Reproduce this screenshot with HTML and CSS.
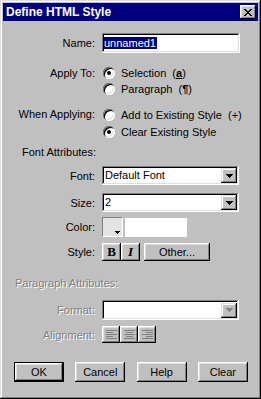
FILE: index.html
```html
<!DOCTYPE html>
<html>
<head>
  <title>Define HTML Style</title>
  <link rel="stylesheet" href="styles.css">
</head>
<body>
  <div class="window">
    <div class="titlebar">
      <span class="title">Define HTML Style</span>
      <span class="close">
        <svg width="8" height="7" viewBox="0 0 8 7" shape-rendering="crispEdges"><path d="M0 0h2v1h-2z M6 0h2v1h-2z M1 1h2v1h-2z M5 1h2v1h-2z M2 2h4v1h-4z M3 3h2v1h-2z M2 4h4v1h-4z M1 5h2v1h-2z M5 5h2v1h-2z M0 6h2v1h-2z M6 6h2v1h-2z" fill="#000"/></svg>
      </span>
    </div>

    <div class="row name-row">
      <span class="lbl">Name:</span>
      <div class="field name-field"><span class="selected">unnamed1</span></div>
    </div>

    <div class="group apply">
      <span class="lbl">Apply To:</span>
      <div class="options">
        <div class="option"><span class="radio on"></span>Selection&nbsp; (<u class="glyph">a</u>)</div>
        <div class="option"><span class="radio"></span>Paragraph&nbsp; (<b>&para;</b>)</div>
      </div>
    </div>

    <div class="group when">
      <span class="lbl">When Applying:</span>
      <div class="options">
        <div class="option"><span class="radio"></span>Add to Existing Style&nbsp; (+)</div>
        <div class="option"><span class="radio on"></span>Clear Existing Style</div>
      </div>
    </div>

    <div class="heading font-heading">Font Attributes:</div>

    <div class="row font-row">
      <span class="lbl">Font:</span>
      <div class="field combo"><span class="value">Default Font</span><span class="drop"><svg width="7" height="4" viewBox="0 0 7 4" shape-rendering="crispEdges"><path d="M0 0h7v1h-7z M1 1h5v1h-5z M2 2h3v1h-3z M3 3h1v1h-1z" fill="#000"/></svg></span></div>
    </div>

    <div class="row size-row">
      <span class="lbl">Size:</span>
      <div class="field combo"><span class="value">2</span><span class="drop"><svg width="7" height="4" viewBox="0 0 7 4" shape-rendering="crispEdges"><path d="M0 0h7v1h-7z M1 1h5v1h-5z M2 2h3v1h-3z M3 3h1v1h-1z" fill="#000"/></svg></span></div>
    </div>

    <div class="row color-row">
      <span class="lbl">Color:</span>
      <span class="swatch"><svg width="5" height="3" viewBox="0 0 5 3" shape-rendering="crispEdges"><path d="M0 0h5v1h-5z M1 1h3v1h-3z M2 2h1v1h-1z" fill="#000"/></svg></span>
      <span class="color-text"></span>
    </div>

    <div class="row style-row">
      <span class="lbl">Style:</span>
      <span class="btn tool bold">B</span>
      <span class="btn tool italic">I</span>
      <span class="btn other">Other...</span>
    </div>

    <div class="heading para-heading disabled">Paragraph Attributes:</div>

    <div class="row format-row">
      <span class="lbl disabled">Format:</span>
      <div class="field combo"><span class="value"></span><span class="drop"><svg width="7" height="4" viewBox="0 0 7 4" shape-rendering="crispEdges"><path d="M0 0h7v1h-7z M1 1h5v1h-5z M2 2h3v1h-3z M3 3h1v1h-1z" fill="#808080"/></svg></span></div>
    </div>

    <div class="row align-row">
      <span class="lbl disabled">Alignment:</span>
      <span class="btn align">
        <svg width="11" height="9" viewBox="0 0 11 9" shape-rendering="crispEdges"><path d="M0 0h11v1h-11z M0 2h7v1h-7z M0 4h11v1h-11z M0 6h7v1h-7z M0 8h11v1h-11z" fill="#808080"/></svg>
      </span>
      <span class="btn align">
        <svg width="11" height="9" viewBox="0 0 11 9" shape-rendering="crispEdges"><path d="M0 0h11v1h-11z M2 2h7v1h-7z M0 4h11v1h-11z M2 6h7v1h-7z M0 8h11v1h-11z" fill="#808080"/></svg>
      </span>
      <span class="btn align">
        <svg width="11" height="9" viewBox="0 0 11 9" shape-rendering="crispEdges"><path d="M0 0h11v1h-11z M4 2h7v1h-7z M0 4h11v1h-11z M4 6h7v1h-7z M0 8h11v1h-11z" fill="#808080"/></svg>
      </span>
    </div>

    <div class="buttons">
      <span class="btn push default">OK</span>
      <span class="btn push">Cancel</span>
      <span class="btn push">Help</span>
      <span class="btn push">Clear</span>
    </div>
  </div>
</body>
</html>
```

FILE: styles.css
```css
body {
  margin: 0;
  font-family: "Liberation Sans", Arial, sans-serif;
  font-size: 11px;
  color: #000;
  background: #c0c0c0;
}

.window {
  box-sizing: border-box;
  width: 261px;
  height: 399px;
  padding: 3px;
  background: #c0c0c0;
  box-shadow: inset -1px -1px #000, inset 1px 1px #dfdfdf,
              inset -2px -2px #808080, inset 2px 2px #fff;
}

.titlebar {
  height: 18px;
  background: #000080;
  display: flex;
  align-items: center;
  justify-content: space-between;
  padding: 0 2px 0 3px;
}

.title {
  color: #fff;
  font-weight: bold;
  font-size: 12px;
}

.close {
  width: 16px;
  height: 14px;
  background: #c0c0c0;
  display: flex;
  align-items: center;
  justify-content: center;
  box-shadow: inset -1px -1px #000, inset 1px 1px #fff,
              inset -2px -2px #808080, inset 2px 2px #dfdfdf;
}

.row {
  display: flex;
  align-items: center;
}

.lbl {
  flex: none;
  width: 92px;
  margin-right: 7px;
  text-align: right;
}

.disabled {
  color: #808080;
  text-shadow: 1px 1px #fff;
}

/* sunken fields */
.field {
  box-sizing: border-box;
  background: #fff;
  box-shadow: inset -1px -1px #fff, inset 1px 1px #808080,
              inset -2px -2px #dfdfdf, inset 2px 2px #000;
}

.name-row {
  margin-top: 12px;
}

.name-field {
  width: 138px;
  height: 20px;
  padding: 3px 2px;
  line-height: 14px;
}

.selected {
  background: #000080;
  color: #fff;
  padding: 0 1px 0 0;
}

.group {
  display: flex;
}

.group .lbl {
  line-height: 16px;
}

.apply {
  margin-top: 12px;
}

.when {
  margin-top: 9px;
}

.when .option {
  height: 17px;
}

.option {
  display: flex;
  align-items: center;
  height: 16px;
}

.radio {
  box-sizing: border-box;
  width: 12px;
  height: 12px;
  margin: 0 6px 0 1px;
  border-radius: 50%;
  background: #fff;
  position: relative;
  box-shadow: inset 1px 1px #808080, inset -1px -1px #fff,
              inset 2px 2px #000, inset -2px -2px #dfdfdf;
}

.radio.on::after {
  content: "";
  position: absolute;
  left: 4px;
  top: 4px;
  width: 4px;
  height: 4px;
  border-radius: 50%;
  background: #000;
}

.glyph {
  font-weight: bold;
}

.heading {
  line-height: 16px;
}

.font-heading {
  margin-top: 4px;
  padding-left: 19px;
}

.para-heading {
  margin-top: 14px;
  padding-left: 12px;
}

.combo {
  width: 137px;
  height: 19px;
  display: flex;
  align-items: center;
  justify-content: space-between;
  padding: 2px 2px 2px 3px;
}

.value {
  line-height: 15px;
}

.drop {
  width: 16px;
  height: 15px;
  background: #c0c0c0;
  display: flex;
  align-items: center;
  justify-content: center;
  box-shadow: inset -1px -1px #000, inset 1px 1px #dfdfdf,
              inset -2px -2px #808080, inset 2px 2px #fff;
}

.font-row {
  margin-top: 6px;
}

.size-row {
  margin-top: 8px;
}

.color-row {
  margin-top: 5px;
}

.swatch {
  box-sizing: border-box;
  width: 21px;
  height: 20px;
  background: #e4e4e4;
  border: 1px solid;
  border-color: #808080 #fff #fff #808080;
  display: flex;
  align-items: flex-end;
  justify-content: flex-end;
  padding: 0 2px 2px 0;
}

.color-text {
  width: 62px;
  height: 19px;
  margin-left: 2px;
  background: #fff;
}

.style-row {
  margin-top: 6px;
}

.btn {
  box-sizing: border-box;
  background: #c0c0c0;
  display: flex;
  align-items: center;
  justify-content: center;
  box-shadow: inset -1px -1px #000, inset 1px 1px #fff,
              inset -2px -2px #808080, inset 2px 2px #dfdfdf;
}

.tool {
  width: 19px;
  height: 18px;
  font-family: "Liberation Serif", "Times New Roman", serif;
  font-weight: bold;
  font-size: 13px;
}

.italic {
  font-style: italic;
}

.other {
  width: 66px;
  height: 18px;
  margin-left: 4px;
}

.format-row {
  margin-top: 9px;
}

.format-row .combo {
  height: 20px;
}

.align-row {
  margin-top: 6px;
}

.align {
  width: 18px;
  height: 17px;
}

.buttons {
  display: flex;
  gap: 11.3px;
  margin-top: 19px;
  padding-left: 11px;
}

.push {
  width: 50px;
  height: 20px;
}

.default {
  box-shadow: inset 0 0 0 1px #000, inset -2px -2px #000, inset 2px 2px #fff,
              inset -3px -3px #808080, inset 3px 3px #dfdfdf;
}
```
